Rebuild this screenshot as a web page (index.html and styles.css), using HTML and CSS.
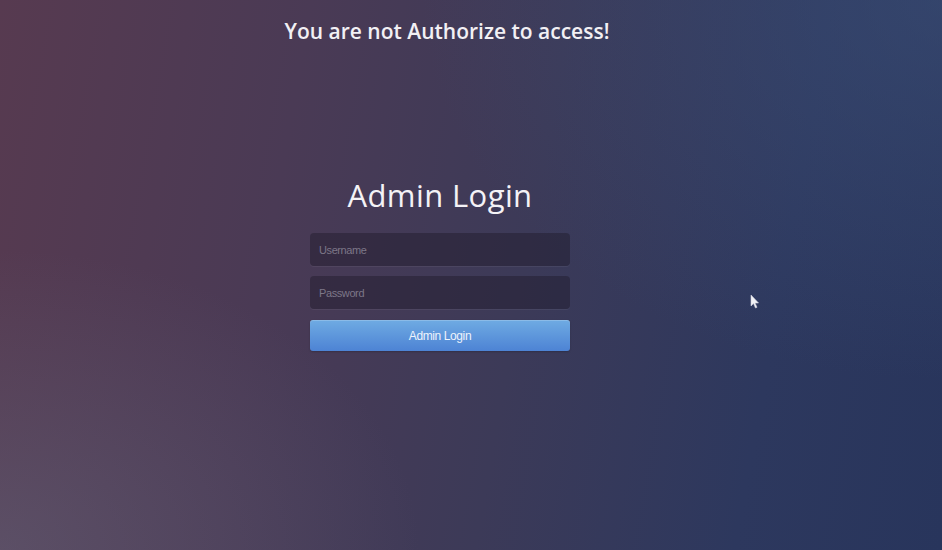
FILE: index.html
```html
<!DOCTYPE html>
<html>
<head>
<meta charset="utf-8">
<title>Admin Login</title>
<link rel="stylesheet" href="styles.css">
</head>
<body>
<div class="page">
  <h2 class="notice">You are not Authorize to access!</h2>
  <div class="login">
    <h1 class="login-title">Admin Login</h1>
    <form class="login-form">
      <input class="field" type="text" placeholder="Username">
      <input class="field" type="password" placeholder="Password">
      <button class="btn" type="button">Admin Login</button>
    </form>
  </div>
  <svg class="cursor" width="10" height="16" viewBox="0 0 10 16"><path d="M1 1 L1 12 L3.5 9.5 L5.5 14 L7 13.3 L5 9 L8.5 9 Z" fill="#f2f2f6" stroke="#d0d0dc" stroke-width="0.6"/></svg>
</div>
</body>
</html>
```
FILE: styles.css
```css
html, body {
  margin: 0;
  height: 100%;
}
body {
  font-family: "Open Sans", "Liberation Sans", sans-serif;
  background:
    radial-gradient(ellipse 420px 300px at 0% 100%, rgba(100,100,122,0.5), rgba(100,100,122,0) 100%),
    radial-gradient(ellipse 520px 380px at 100% 0%, rgba(60,80,120,0.55), rgba(60,80,120,0) 100%),
    linear-gradient(100deg, #573a50 0%, #4a3a55 30%, #3c3a58 55%, #2d385e 80%, #28355c 100%);
  color: #fff;
  overflow: hidden;
}
.page {
  position: relative;
  height: 550px;
  padding-right: 62px;
  display: flex;
  flex-direction: column;
  align-items: center;
}
.notice {
  margin: 17px 0 0 14px;
  font-size: 21px;
  font-weight: 600;
  color: #f2f0f4;
  line-height: 28px;
  letter-spacing: 0;
}
.login {
  margin-top: 130px;
  width: 260px;
  display: flex;
  flex-direction: column;
  align-items: center;
}
.login-title {
  margin: 0;
  font-size: 31px;
  font-weight: 400;
  line-height: 40px;
  color: #f4f2f6;
  letter-spacing: 0.4px;
}
.login-form {
  margin-top: 18px;
  width: 260px;
  display: flex;
  flex-direction: column;
  gap: 10px;
}
.field {
  box-sizing: border-box;
  height: 33px;
  width: 100%;
  border: none;
  border-radius: 4px;
  background: rgba(30, 26, 42, 0.45);
  box-shadow: 0 1px 0 rgba(255,255,255,0.06);
  padding: 0 9px;
  font-family: "Liberation Sans", Arial, sans-serif;
  font-size: 11px;
  color: #ddd;
  outline: none;
}
.field::placeholder {
  color: #7d7788;
  letter-spacing: -0.4px;
}
.btn {
  margin-top: 1px;
  height: 31px;
  border: none;
  border-radius: 3px;
  background: linear-gradient(to bottom, #6fabe3, #4d83d4);
  box-shadow: inset 0 1px 0 rgba(255,255,255,0.2), 0 1px 2px rgba(0,0,0,0.2);
  color: #eef3fb;
  font-family: "Liberation Sans", Arial, sans-serif;
  font-size: 12px;
  letter-spacing: -0.4px;
}
.cursor {
  position: absolute;
  left: 750px;
  top: 294px;
}
```
